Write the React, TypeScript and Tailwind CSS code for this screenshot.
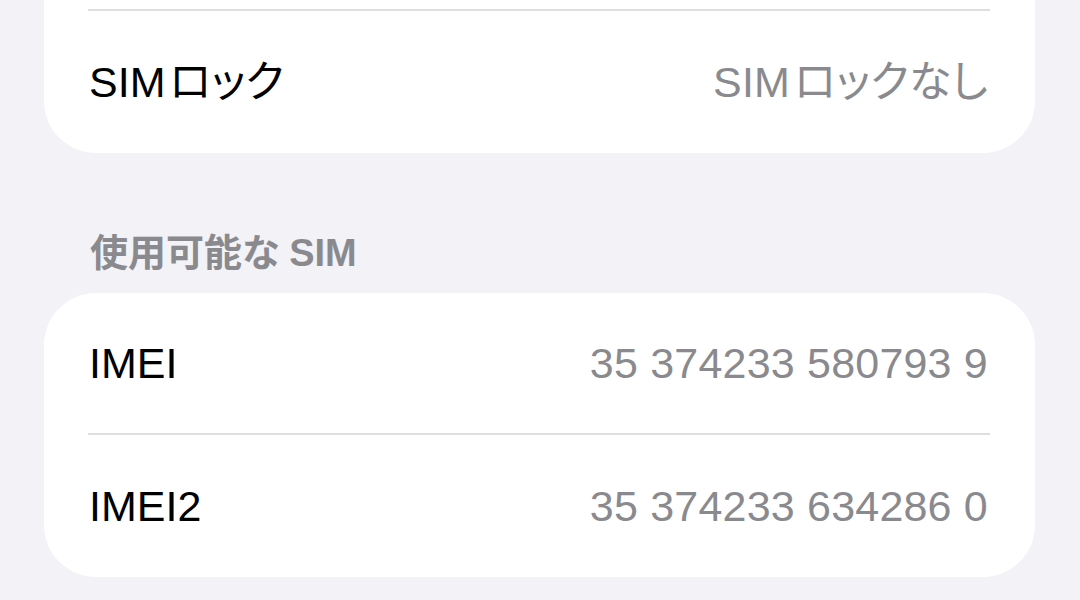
import React from "react";

const font = {
  fontFamily: '"Liberation Sans", "Noto Sans CJK JP", sans-serif',
};

const Separator = () => (
  <div className="ml-[44px] mr-[45px] h-[2px] bg-[#dedee2]" />
);

// "SIM" followed by kana gets a little breathing room, like iOS does
const SimText = ({ rest }: { rest: string }) => (
  <>
    <span className="mr-[4px]">SIM</span>
    {rest}
  </>
);

const Row = ({
  label,
  value,
  h,
}: {
  label: React.ReactNode;
  value: React.ReactNode;
  h: string;
}) => (
  <div className={`flex items-center justify-between pl-[45px] pr-[47px] ${h}`}>
    <span className="text-[43px] leading-none text-black [font-feature-settings:'palt']">
      {label}
    </span>
    <span className="text-[43px] leading-none text-[#8a8a8e] tracking-[0.2px] [font-feature-settings:'palt']">
      {value}
    </span>
  </div>
);

const App = () => {
  return (
    <div
      className="h-[600px] overflow-hidden bg-[#f2f2f7] pl-[44px] pr-[45px]"
      style={font}
    >
      <div className="rounded-b-[52px] bg-white pt-[9px]">
        <Separator />
        <Row
          label={<SimText rest="ロック" />}
          value={<SimText rest="ロックなし" />}
          h="h-[142px]"
        />
      </div>

      <div className="h-[140px] flex items-end pl-[46px] pb-[21px]">
        <h2 className="text-[38px] font-bold leading-none text-[#8a8a8e] [font-feature-settings:'palt']">
          使用可能な<span className="ml-[10px]">SIM</span>
        </h2>
      </div>

      <div className="rounded-[52px] bg-white">
        <Row label="IMEI" value="35 374233 580793 9" h="h-[140px]" />
        <Separator />
        <Row label="IMEI2" value="35 374233 634286 0" h="h-[142px]" />
      </div>
    </div>
  );
};

export default App;
